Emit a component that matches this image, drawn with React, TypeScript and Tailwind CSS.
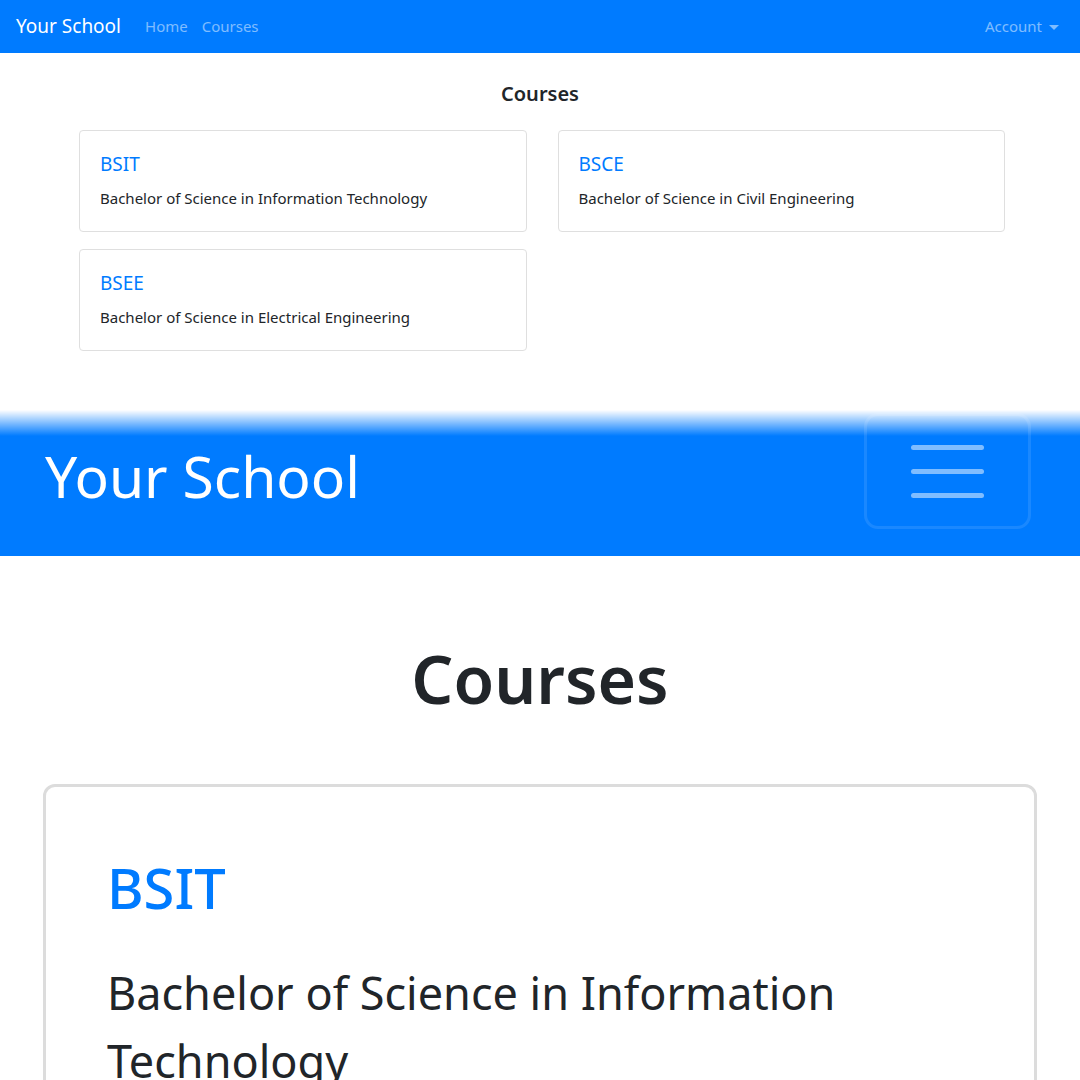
const courses = [
  { code: "BSIT", name: "Bachelor of Science in Information Technology" },
  { code: "BSCE", name: "Bachelor of Science in Civil Engineering" },
  { code: "BSEE", name: "Bachelor of Science in Electrical Engineering" },
];

function DesktopView() {
  return (
    <div className="h-[410px] bg-white">
      {/* Navbar */}
      <nav className="h-[53px] bg-[#007bff] flex items-center px-4">
        <span className="text-[19px] text-white mr-6">Your School</span>
        <div className="flex gap-[14px] text-[15px] text-white/50">
          <span>Home</span>
          <span>Courses</span>
        </div>
        <div className="ml-auto flex items-center gap-[7px] text-[15px] text-white/50 pr-[5px]">
          <span>Account</span>
          <span className="w-0 h-0 border-l-[5px] border-r-[5px] border-t-[5px] border-l-transparent border-r-transparent border-t-white/50 mt-[1px]" />
        </div>
      </nav>

      <h5 className="text-center text-[20px] font-semibold text-[#212529] mt-[28px] leading-[26px]">Courses</h5>

      <div className="grid grid-cols-2 gap-x-[31px] gap-y-[17px] w-[926px] ml-[79px] mt-[23px]">
        {courses.map((c) => (
          <div key={c.code} className="h-[102px] border border-[#dfdfdf] rounded-[4px] px-5 pt-[20px]">
            <div className="text-[19px] text-[#007bff] leading-[26px]">{c.code}</div>
            <div className="text-[15px] text-[#212529] mt-[10px] leading-[22px]">{c.name}</div>
          </div>
        ))}
      </div>
    </div>
  );
}

function MobileView() {
  return (
    <div className="relative">
      {/* fade between the two screenshots */}
      <div className="absolute left-0 right-0 top-0 h-[26px] bg-gradient-to-b from-white to-white/0 z-10" />
      <nav className="h-[146px] bg-[#007bff] flex items-center pl-[45px] pr-[49px]">
        <span className="text-[57px] text-white leading-none -mt-[14px]">Your School</span>
        <div className="ml-auto w-[167px] h-[116px] border-[3px] border-white/10 rounded-[14px] flex flex-col items-center justify-center gap-[19px] -mt-[24px]">
          <span className="block w-[73px] h-[5px] rounded-full bg-white/50" />
          <span className="block w-[73px] h-[5px] rounded-full bg-white/50" />
          <span className="block w-[73px] h-[5px] rounded-full bg-white/50" />
        </div>
      </nav>

      <h1 className="text-center text-[66px] font-semibold text-[#212529] mt-[82px] leading-[80px]">Courses</h1>

      <div className="mx-[43px] mt-[66px] border-[3px] border-[#dcdcdc] rounded-[12px] px-[61px] pt-[60px] h-[400px]">
        <div className="text-[56px] font-medium text-[#007bff] leading-[80px]">BSIT</div>
        <div className="text-[45px] text-[#212529] leading-[68px] mt-[32px]">
          Bachelor of Science in Information Technology
        </div>
      </div>
    </div>
  );
}

export default function App() {
  return (
    <div className="w-[1080px] h-[1080px] overflow-hidden bg-white" style={{ fontFamily: '"Noto Sans", "Open Sans", sans-serif' }}>
      <DesktopView />
      <MobileView />
    </div>
  );
}
